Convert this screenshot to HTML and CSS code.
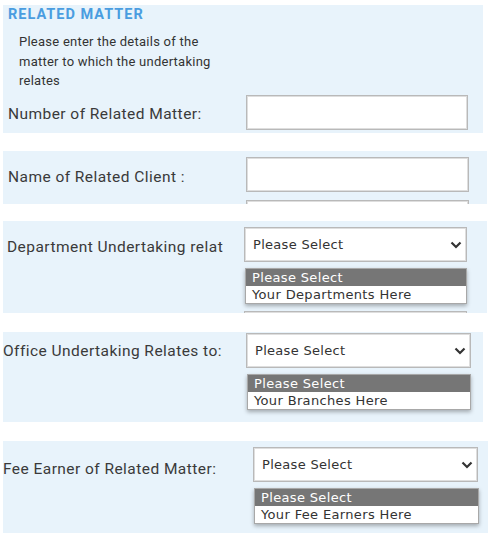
FILE: index.html
```html
<!DOCTYPE html>
<html lang="en">
<head>
    <meta charset="UTF-8">
    <meta name="viewport" content="width=device-width, initial-scale=1.0">
    <title>Related Matter</title>
    <link rel="stylesheet" href="styles.css">
</head>
<body>

<div class="page">

    <div class="panel panel-intro">
        <h2>RELATED MATTER</h2>
        <p class="intro">Please enter the details of the<br>matter to which the undertaking<br>relates</p>
        <div class="row">
            <label for="matterNumber">Number of Related Matter:</label>
            <input type="text" id="matterNumber" class="field">
        </div>
    </div>

    <div class="panel panel-client">
        <div class="row">
            <label for="clientName">Name of Related Client :</label>
            <div class="field-stack">
                <input type="text" id="clientName" class="field">
                <input type="text" class="field">
            </div>
        </div>
    </div>

    <div class="panel panel-dept">
        <div class="row">
            <label for="department" class="label-clip">Department Undertaking relat</label>
            <div class="field-stack">
                <div class="select" id="department">
                    <span>Please Select</span>
                    <svg class="chevron" viewBox="0 0 12 8" width="12" height="8"><polyline points="1.5,1.5 6,6 10.5,1.5" fill="none" stroke="#333" stroke-width="2.2"/></svg>
                </div>
                <ul class="options">
                    <li class="selected">Please Select</li>
                    <li>Your Departments Here</li>
                </ul>
                <div class="field field-peek"></div>
            </div>
        </div>
    </div>

    <div class="panel panel-office">
        <div class="row">
            <label for="office">Office Undertaking Relates to:</label>
            <div class="field-stack">
                <div class="select" id="office">
                    <span>Please Select</span>
                    <svg class="chevron" viewBox="0 0 12 8" width="12" height="8"><polyline points="1.5,1.5 6,6 10.5,1.5" fill="none" stroke="#333" stroke-width="2.2"/></svg>
                </div>
                <ul class="options">
                    <li class="selected">Please Select</li>
                    <li>Your Branches Here</li>
                </ul>
            </div>
        </div>
    </div>

    <div class="panel panel-earner">
        <div class="row">
            <label for="feeEarner">Fee Earner of Related Matter:</label>
            <div class="field-stack">
                <div class="select" id="feeEarner">
                    <span>Please Select</span>
                    <svg class="chevron" viewBox="0 0 12 8" width="12" height="8"><polyline points="1.5,1.5 6,6 10.5,1.5" fill="none" stroke="#333" stroke-width="2.2"/></svg>
                </div>
                <ul class="options">
                    <li class="selected">Please Select</li>
                    <li>Your Fee Earners Here</li>
                </ul>
            </div>
        </div>
    </div>

</div>

</body>
</html>
```

FILE: styles.css
```css
body {
    margin: 0;
    padding: 0;
    background-color: #fff;
    font-family: Roboto, "Liberation Sans", sans-serif;
    color: #3a3a3a;
}

.page {
    padding: 5px 0 0 3px;
    display: flex;
    flex-direction: column;
}

.panel {
    background-color: #e8f3fb;
    overflow: hidden;
}

h2 {
    margin: 0;
    padding: 1px 0 0 5px;
    font-size: 14.5px;
    line-height: 18px;
    letter-spacing: 1px;
    font-weight: bold;
    color: #4a9de0;
}

.intro {
    margin: 8px 0 0 16px;
    font-size: 13px;
    line-height: 19.5px;
    letter-spacing: 0.25px;
    color: #333;
}

.row {
    display: flex;
    align-items: flex-start;
}

label {
    font-size: 15.5px;
    line-height: 20px;
    letter-spacing: 0.45px;
    white-space: nowrap;
    color: #3a3a3a;
}

.field {
    display: block;
    box-sizing: border-box;
    height: 35px;
    margin: 0;
    padding: 0 8px;
    background-color: #fff;
    border: 1px solid #b9b9b9;
    box-shadow: inset 0 0 0 1px #dedede;
    font: inherit;
}

.field-stack {
    display: flex;
    flex-direction: column;
}

/* panel 1 */
.panel-intro {
    width: 480px;
    height: 128px;
}

.panel-intro .row {
    margin-top: 4px;
}

.panel-intro label {
    width: 238px;
    padding: 9.5px 0 0 5px;
}

.panel-intro .field {
    width: 222px;
}

/* panel 2 */
.panel-client {
    width: 484px;
    height: 53px;
    margin-top: 18px;
}

.panel-client .row {
    padding-top: 6px;
}

.panel-client label {
    width: 238px;
    padding: 9.5px 0 0 5px;
}

.panel-client .field {
    width: 223px;
}

.panel-client .field + .field {
    margin-top: 8px;
}

/* selects */
.select {
    box-sizing: border-box;
    height: 35px;
    padding: 0 4px 0 8px;
    display: flex;
    align-items: center;
    justify-content: space-between;
    background-color: #fff;
    border: 1px solid #b9b9b9;
    box-shadow: inset 0 0 0 1px #dedede;
    font-family: "DejaVu Sans", Verdana, sans-serif;
    font-size: 13px;
    letter-spacing: 0.3px;
    color: #333;
}

.options {
    list-style: none;
    margin: 6px 0 0 1px;
    padding: 0;
    background-color: #fff;
    border: 1px solid #a8a8a8;
    box-shadow: 0 2px 4px rgba(0, 0, 0, 0.3);
    font-family: "DejaVu Sans", Verdana, sans-serif;
    font-size: 13px;
    line-height: 17px;
    letter-spacing: 0.35px;
    color: #333;
}

.options li {
    padding: 0 6px;
}

.options .selected {
    background-color: #767676;
    color: #fff;
}

/* panel 3 */
.panel-dept {
    width: 484px;
    height: 92px;
    margin-top: 17px;
}

.panel-dept .row {
    padding-top: 6px;
}

.panel-dept .label-clip {
    width: 216px;
    overflow: hidden;
    padding: 10px 0 0 4px;
    margin-right: 21px;
}

.panel-dept .select {
    width: 223px;
}

.panel-dept .options {
    width: 220px;
}

.panel-dept .field-peek {
    width: 223px;
    margin-top: 7px;
}

/* panel 4 */
.panel-office {
    width: 480px;
    height: 90px;
    margin-top: 19px;
}

.panel-office .row {
    padding-top: 1px;
}

.panel-office label {
    width: 243px;
    padding: 7.5px 0 0 0;
}

.panel-office .select {
    width: 225px;
}

.panel-office .options {
    width: 222px;
}

/* panel 5 */
.panel-earner {
    width: 485px;
    height: 92px;
    margin-top: 19px;
}

.panel-earner .row {
    padding-top: 6px;
}

.panel-earner label {
    width: 250px;
    padding: 12px 0 0 0;
}

.panel-earner .select {
    width: 225px;
}

.panel-earner .options {
    width: 223px;
}
```
